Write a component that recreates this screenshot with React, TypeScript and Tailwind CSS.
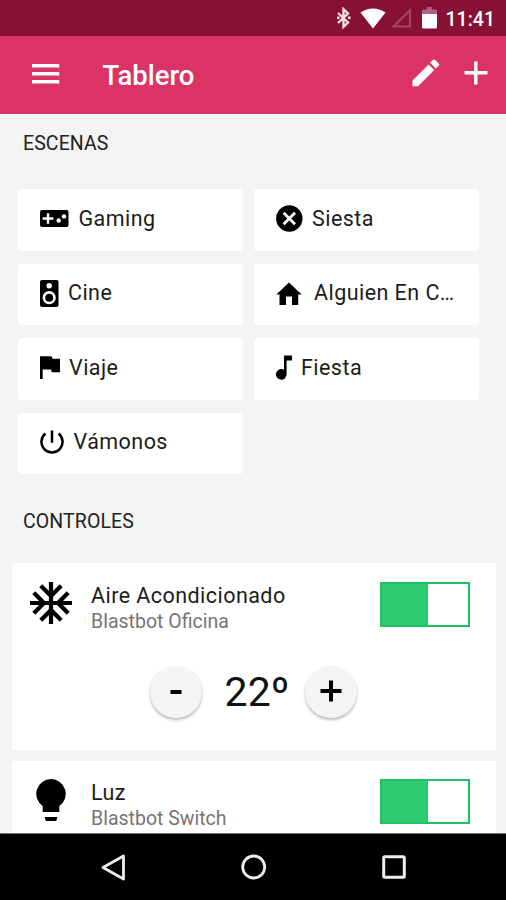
import { useState, type ReactNode } from "react";

interface Scene {
  label: string;
  icon: ReactNode;
}

const scenes: Scene[] = [
  {
    label: "Gaming",
    icon: (
      <svg width="29" height="17" viewBox="0 0 29 17" className="mr-[9.5px]">
        <rect width="28.5" height="17" rx="2" fill="#000" />
        <path d="M8 3.2v10.6M2.7 8.5h10.6" stroke="#fff" strokeWidth="2.4" />
        <circle cx="18.7" cy="10.5" r="2.2" fill="#fff" />
        <circle cx="24" cy="6.4" r="2.2" fill="#fff" />
      </svg>
    ),
  },
  {
    label: "Siesta",
    icon: (
      <svg width="27" height="27" viewBox="0 0 27 27" className="mr-[9px]">
        <circle cx="13.3" cy="13.5" r="13.2" fill="#000" />
        <path d="M7.6 7.8l11.4 11.4M19 7.8l-11.4 11.4" stroke="#fff" strokeWidth="2.8" />
      </svg>
    ),
  },
  {
    label: "Cine",
    icon: (
      <svg width="19" height="27" viewBox="0 0 19 27" className="mr-[9px]">
        <rect width="18.5" height="27" rx="2" fill="#000" />
        <circle cx="9.2" cy="5.7" r="2.7" fill="#fff" />
        <circle cx="9.2" cy="17.7" r="5.3" fill="none" stroke="#fff" strokeWidth="2.6" />
      </svg>
    ),
  },
  {
    label: "Alguien En C…",
    icon: (
      <svg width="26" height="23" viewBox="0 0 26 23" className="mr-3">
        <path d="M3.5 23V12.5H0.3L13 0.5l12.7 12H22.2V23H16v-8.5h-6V23z" />
      </svg>
    ),
  },
  {
    label: "Viaje",
    icon: (
      <svg width="20" height="23" viewBox="0 0 20 23" className="mr-[9px]">
        <path d="M0 0.3h11.7l0.8 2.5H20v13.4h-8.2l-0.8-2.6H2.7V23H0z" />
      </svg>
    ),
  },
  {
    label: "Fiesta",
    icon: (
      <svg width="16" height="25" viewBox="0 0 16 25" className="mr-[9px]">
        <path d="M8 0.5h8v5H10.6V19.3A5.3 5.3 0 1 1 8 14.8z" />
      </svg>
    ),
  },
  {
    label: "Vámonos",
    icon: (
      <svg width="24" height="25" viewBox="0 0 24 25" className="mr-[9.5px]">
        <path
          d="M12 0.5v12.2M5.4 3.6a10.6 10.6 0 1 0 13.2 0"
          fill="none"
          stroke="#000"
          strokeWidth="2.5"
        />
      </svg>
    ),
  },
];

function StatusBar() {
  return (
    <div className="flex h-9 shrink-0 items-center justify-end bg-[#861133] pr-[11px] text-white">
      <svg width="15" height="22" viewBox="0 0 15 22" className="mr-[9px]" fill="none" stroke="#f5dfe6" strokeWidth="2.4">
        <path d="M2 6l10 9.5-4.500 4.300V2.200L12 6.500 2 16" />
        <path d="M1 9.500h2.600v2.600H1zM12 9.500h2.600v2.600H12z" fill="#f5dfe6" stroke="none" />
      </svg>
      <svg width="26" height="21" viewBox="0 0 26 21" className="mr-[5px]" fill="#fff">
        <path d="M0.5 4.6Q13-3.6 25.5 4.6L13 20.5z" />
      </svg>
      <svg width="21" height="20" viewBox="0 0 21 20" className="mr-[10px]" fill="none" stroke="#a84468" strokeWidth="2">
        <path d="M2.5 18.5L19 2.2v16.3z" />
      </svg>
      <svg width="15" height="22" viewBox="0 0 15 22" className="mr-[9px]">
        <path d="M1 2.5h3.8V0h5v2.5H14a1 1 0 0 1 1 1V8H0V3.5a1 1 0 0 1 1-1z" fill="#b4607e" />
        <path d="M0 7h15v13a1.5 1.5 0 0 1-1.5 1.5h-12A1.5 1.5 0 0 1 0 20z" fill="#fff" />
      </svg>
      <span className="pt-[3px] text-[19.5px] leading-none font-medium">11:41</span>
    </div>
  );
}

function Header() {
  return (
    <header className="flex h-[77.5px] shrink-0 items-center bg-[#dc3366] pr-[18px] pb-[3px] pl-8 text-white">
      <button aria-label="Menu" className="pt-px">
        <svg width="28" height="20" viewBox="0 0 28 20" fill="#fff">
          <path d="M0 0h27.3v3.4H0zM0 8h27.3v3.4H0zM0 16h27.3v3.4H0z" />
        </svg>
      </button>
      <h1 className="ml-[42.5px] pt-[4px] text-[27.5px] leading-none font-medium">Tablero</h1>
      <button aria-label="Editar" className="ml-auto">
        <svg width="28" height="28" viewBox="0 0 29 29" fill="#fff">
          <path d="M0.5 22.3L17.2 5.6l5.8 5.8L6.3 28.1H0.5zM18.8 4L21.9 0.9q1-1 2 0l3.9 3.9q1 1 0 2L24.6 9.8z" />
        </svg>
      </button>
      <button aria-label="Añadir" className="ml-6">
        <svg width="24" height="24" viewBox="0 0 24 24" stroke="#fff" strokeWidth="3.4">
          <path d="M11.8 0.5v23M0.5 11.8h23" />
        </svg>
      </button>
    </header>
  );
}

function SceneCard({ label, icon }: Scene) {
  return (
    <button className="flex h-[61.5px] min-w-0 items-center rounded-[4px] bg-white pb-[2px] pl-[22px] text-left">
      <span className="shrink-0">{icon}</span>
      <span className="text-[21.5px] tracking-[0.45px] whitespace-nowrap text-[#1c1c1c]">{label}</span>
    </button>
  );
}

function Toggle() {
  const [on, setOn] = useState(true);
  return (
    <button
      role="switch"
      aria-checked={on}
      onClick={() => setOn(!on)}
      className={`flex h-[45px] w-[90px] border-2 border-[#20c161] bg-white ${on ? "" : "justify-end"}`}
    >
      <span className="h-full w-[46px] border-r border-[#20c161] bg-[#2ecc71]" />
    </button>
  );
}

function ControlHead({ icon, title, device }: { icon: ReactNode; title: string; device: string }) {
  return (
    <div className="flex items-start">
      <div className="flex w-[42px] justify-center">{icon}</div>
      <div className="ml-[19px] flex-1 pt-px">
        <p className="text-[21.5px] leading-[26px] tracking-[0.45px] text-[#1c1c1c]">{title}</p>
        <p className="text-[19.5px] leading-[26px] text-[#757575]">{device}</p>
      </div>
      <Toggle />
    </div>
  );
}

const roundButton =
  "flex size-[52px] items-center justify-center rounded-full bg-[#f4f4f4] shadow-[0_2px_3px_rgba(0,0,0,0.28)]";

function AirControl() {
  const [temp, setTemp] = useState(22);
  return (
    <section className="h-[186.5px] shrink-0 bg-white pt-[19px] pr-[26px] pl-[18px]">
      <ControlHead
        title="Aire Acondicionado"
        device="Blastbot Oficina"
        icon={
          <svg width="42" height="42" viewBox="0 0 42 42" fill="none" stroke="#000" strokeWidth="4.2">
            <path d="M21 0v42M0 21h42" />
            <path d="M10.8 3.8L21 14 31.2 3.8M10.8 38.2L21 28l10.2 10.2M3.8 10.8L14 21 3.8 31.2M38.2 10.8L28 21l10.2 10.2" />
          </svg>
        }
      />
      <div className="mt-[31px] flex items-center pl-[120px]">
        <button className={roundButton} aria-label="Bajar" onClick={() => setTemp(temp - 1)}>
          <svg width="12" height="4" viewBox="0 0 12 4">
            <path d="M0.5 0h11v4h-11z" />
          </svg>
        </button>
        <span className="w-[103px] pl-[7px] text-center text-[41px] leading-[52px] text-[#111]">{temp}º</span>
        <button className={roundButton} aria-label="Subir" onClick={() => setTemp(temp + 1)}>
          <svg width="22" height="22" viewBox="0 0 22 22" stroke="#000" strokeWidth="4" className="mb-[2px]">
            <path d="M11 0.5v21M0.5 11h21" />
          </svg>
        </button>
      </div>
    </section>
  );
}

function LightControl() {
  return (
    <section className="shrink-0 bg-white pt-[18px] pr-[26px] pb-5 pl-[18px]">
      <ControlHead
        title="Luz"
        device="Blastbot Switch"
        icon={
          <svg width="30" height="42" viewBox="0 0 30 42">
            <path d="M15 0a14.8 14.8 0 0 1 8.3 27V33H6.7V27A14.8 14.8 0 0 1 15 0z" />
            <path d="M8.7 38h12.6l-1 4h-10.6z" />
          </svg>
        }
      />
    </section>
  );
}

function NavBar() {
  return (
    <nav className="flex h-[67px] shrink-0 items-center justify-between border-t border-[#777] bg-black pr-[100px] pl-[101px]">
      <svg width="25" height="27" viewBox="0 0 25 27" fill="none" stroke="#eee" strokeWidth="2.8" strokeLinejoin="round">
        <path d="M2 13.5L22.5 2v23z" />
      </svg>
      <svg width="26" height="26" viewBox="0 0 26 26" fill="none" stroke="#eee" strokeWidth="2.8">
        <circle cx="12.7" cy="13" r="11" />
      </svg>
      <svg width="24" height="24" viewBox="0 0 24 24" fill="none" stroke="#eee" strokeWidth="3">
        <rect x="1.7" y="1.7" width="20.6" height="20.6" rx="1" />
      </svg>
    </nav>
  );
}

export default function App() {
  return (
    <div className="flex h-[900px] w-[506px] flex-col overflow-hidden bg-[#f4f4f4] font-[Roboto,sans-serif]">
      <StatusBar />
      <Header />
      <main className="flex min-h-0 flex-1 flex-col overflow-hidden">
        <h2 className="pt-4 pl-[23px] text-[19.5px] leading-7 tracking-[0.1px] text-[#222]">ESCENAS</h2>
        <div className="mt-[31.5px] grid grid-cols-2 gap-x-[11px] gap-y-[13px] pr-[27px] pl-[18px]">
          {scenes.map((scene) => (
            <SceneCard key={scene.label} {...scene} />
          ))}
        </div>
        <h2 className="mt-[34px] pl-[23px] text-[19.5px] leading-7 tracking-[0.1px] text-[#222]">CONTROLES</h2>
        <div className="mt-[27px] flex flex-col gap-[11px] pr-2.5 pl-3">
          <AirControl />
          <LightControl />
        </div>
      </main>
      <NavBar />
    </div>
  );
}
